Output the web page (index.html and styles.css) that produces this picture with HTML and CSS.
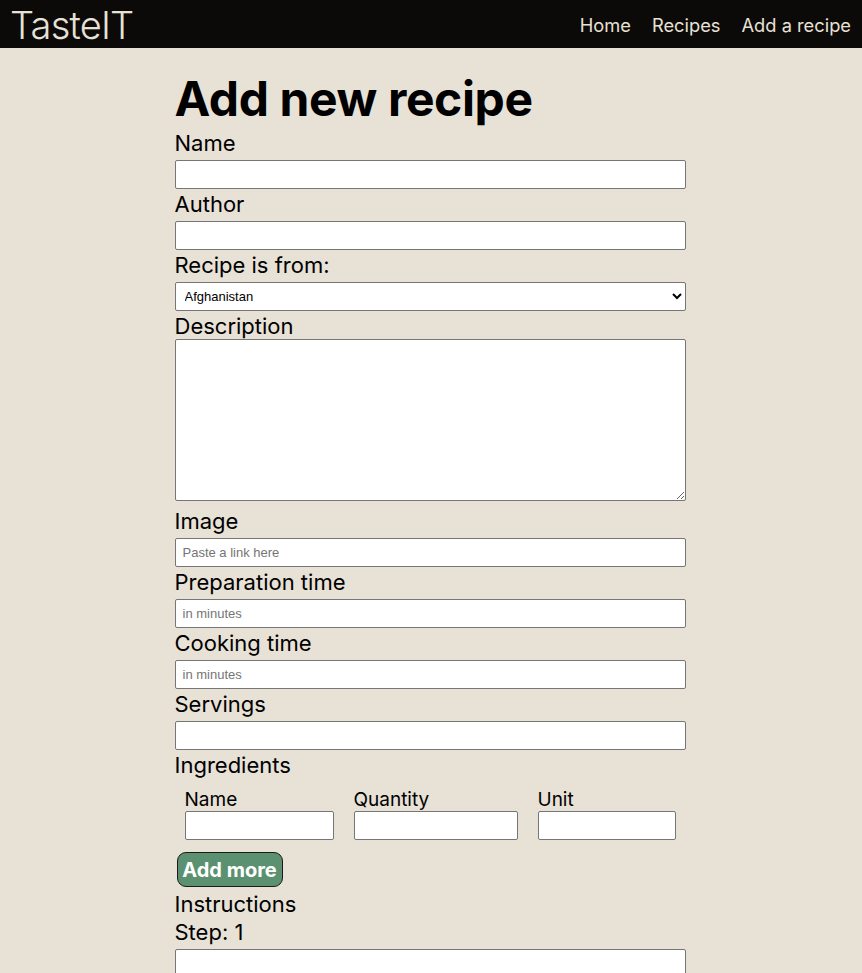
FILE: index.html
```html
<!DOCTYPE html>
<html>
<head>
<meta charset="utf-8">
<link rel="stylesheet" href="styles.css">
</head>
<body>
<header class="topbar">
  <div class="brand">TasteIT</div>
  <nav class="nav">
    <a href="#">Home</a>
    <a href="#">Recipes</a>
    <a href="#">Add a recipe</a>
  </nav>
</header>
<main class="page">
  <form class="form">
    <h1 class="title">Add new recipe</h1>
    <label class="lbl">Name</label>
    <input class="field" type="text">
    <label class="lbl">Author</label>
    <input class="field" type="text">
    <label class="lbl">Recipe is from:</label>
    <select class="field select"><option>Afghanistan</option></select>
    <label class="lbl">Description</label>
    <textarea class="field area"></textarea>
    <label class="lbl">Image</label>
    <input class="field" type="text" placeholder="Paste a link here">
    <label class="lbl">Preparation time</label>
    <input class="field" type="text" placeholder="in minutes">
    <label class="lbl">Cooking time</label>
    <input class="field" type="text" placeholder="in minutes">
    <label class="lbl">Servings</label>
    <input class="field" type="text">
    <label class="lbl">Ingredients</label>
    <div class="ing-row">
      <div class="ing-col col-name"><span class="ing-lbl">Name</span><input class="ing-input" type="text"></div>
      <div class="ing-col col-qty"><span class="ing-lbl">Quantity</span><input class="ing-input" type="text"></div>
      <div class="ing-col col-unit"><span class="ing-lbl">Unit</span><input class="ing-input" type="text"></div>
    </div>
    <button type="button" class="add-btn">Add more</button>
    <label class="lbl">Instructions</label>
    <label class="lbl">Step: 1</label>
    <input class="field" type="text">
  </form>
</main>
</body>
</html>
```
FILE: styles.css
```css
html, body {
  margin: 0;
  padding: 0;
}
body {
  background: #e7e1d6;
  font-family: Inter, "Noto Sans", sans-serif;
  color: #000;
  min-height: 973px;
}
.topbar {
  background: #0b0a08;
  height: 48px;
  display: flex;
  align-items: center;
  justify-content: space-between;
  padding: 0 11px 0 10px;
  color: #e8e1d6;
}
.brand {
  font-size: 38px;
  font-weight: 300;
  line-height: 48px;
  letter-spacing: -0.8px;
  padding-top: 2px;
}
.nav {
  display: flex;
  gap: 21px;
  padding-top: 2px;
}
.nav a {
  color: #e8e1d6;
  text-decoration: none;
  font-size: 18.3px;
  font-weight: 400;
}
.page {
  display: flex;
  justify-content: center;
  padding-right: 1px;
}
.form {
  width: 511px;
  display: flex;
  flex-direction: column;
  align-items: stretch;
  margin-left: -1px;
}
.title {
  margin: 0;
  font-size: 48px;
  font-weight: 700;
  line-height: 80px;
  height: 70px;
  padding-top: 11px;
  letter-spacing: -0.4px;
}
.lbl {
  display: block;
  font-size: 22px;
  line-height: 28px;
  height: 28px;
}
.field {
  box-sizing: border-box;
  width: 511px;
  height: 29px;
  margin: 3px 0 1px;
  border: 1px solid #767676;
  border-radius: 2px;
  background: #fff;
  font-family: "Liberation Sans", Arial, sans-serif;
  font-size: 13px;
  padding: 1px 7px;
}
.field::placeholder {
  color: #757575;
}
.select {
  padding: 1px 5px;
  color: #000;
}
.area {
  height: 162px;
  margin: -1px 0 6px;
  resize: vertical;
}
.ing-row {
  display: flex;
  gap: 20px;
  padding: 10px 0 0 10px;
}
.ing-col {
  display: flex;
  flex-direction: column;
}
.ing-lbl {
  font-size: 19px;
  line-height: 22px;
  height: 22px;
}
.ing-input {
  box-sizing: border-box;
  height: 29px;
  border: 1px solid #767676;
  border-radius: 2px;
  background: #fff;
  margin: 0;
}
.col-name .ing-input { width: 149px; }
.col-qty .ing-input { width: 164px; }
.col-unit .ing-input { width: 138px; }
.add-btn {
  align-self: flex-start;
  margin: 12px 0 3px 2px;
  width: 106px;
  height: 35px;
  background: #5b9170;
  color: #fff;
  border: 1px solid #1a1a1a;
  border-radius: 9px;
  font-family: Inter, "Noto Sans", sans-serif;
  font-weight: 700;
  font-size: 20px;
  padding: 0;
}
```
